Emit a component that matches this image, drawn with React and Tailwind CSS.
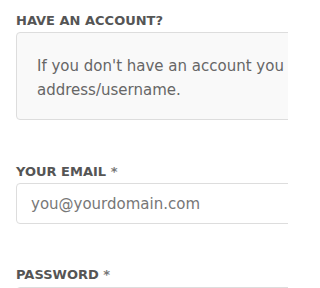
import React from 'react';

const font = { fontFamily: '"DejaVu Sans", "Open Sans", sans-serif' };

export default function App() {
    return (
        <div className="w-[288px] h-[288px] overflow-hidden bg-white" style={font}>
            <div className="w-[640px] pl-4 pt-[13px]">
                <div className="text-[13px] font-bold leading-[16px] text-[#555]">HAVE AN ACCOUNT?</div>
                <div className="mt-[3px] h-[88px] rounded-[4px] border border-[#ddd] bg-[#f9f9f9] px-5 pt-[21px] text-[15px] leading-[24px] text-[#666]">
                    If you don't have an account you can register with your email
                    <br />
                    address/username.
                </div>

                <div className="mt-[44px] text-[13px] font-bold leading-[16px] text-[#555]">
                    YOUR EMAIL <span className="text-[#777]">*</span>
                </div>
                <input
                    type="text"
                    placeholder="you@yourdomain.com"
                    className="mt-[3px] block h-[41px] w-full rounded-[4px] border border-[#ddd] bg-white px-[14px] text-[15px] text-[#666] placeholder:text-[#777] outline-none"
                    style={font}
                />

                <div className="mt-[43px] text-[13px] font-bold leading-[16px] text-[#555]">
                    PASSWORD <span className="text-[#777]">*</span>
                </div>
                <input
                    type="password"
                    className="mt-[4px] block h-[41px] w-full rounded-[4px] border border-[#ddd] bg-white px-[14px] outline-none"
                />
            </div>
        </div>
    );
}
